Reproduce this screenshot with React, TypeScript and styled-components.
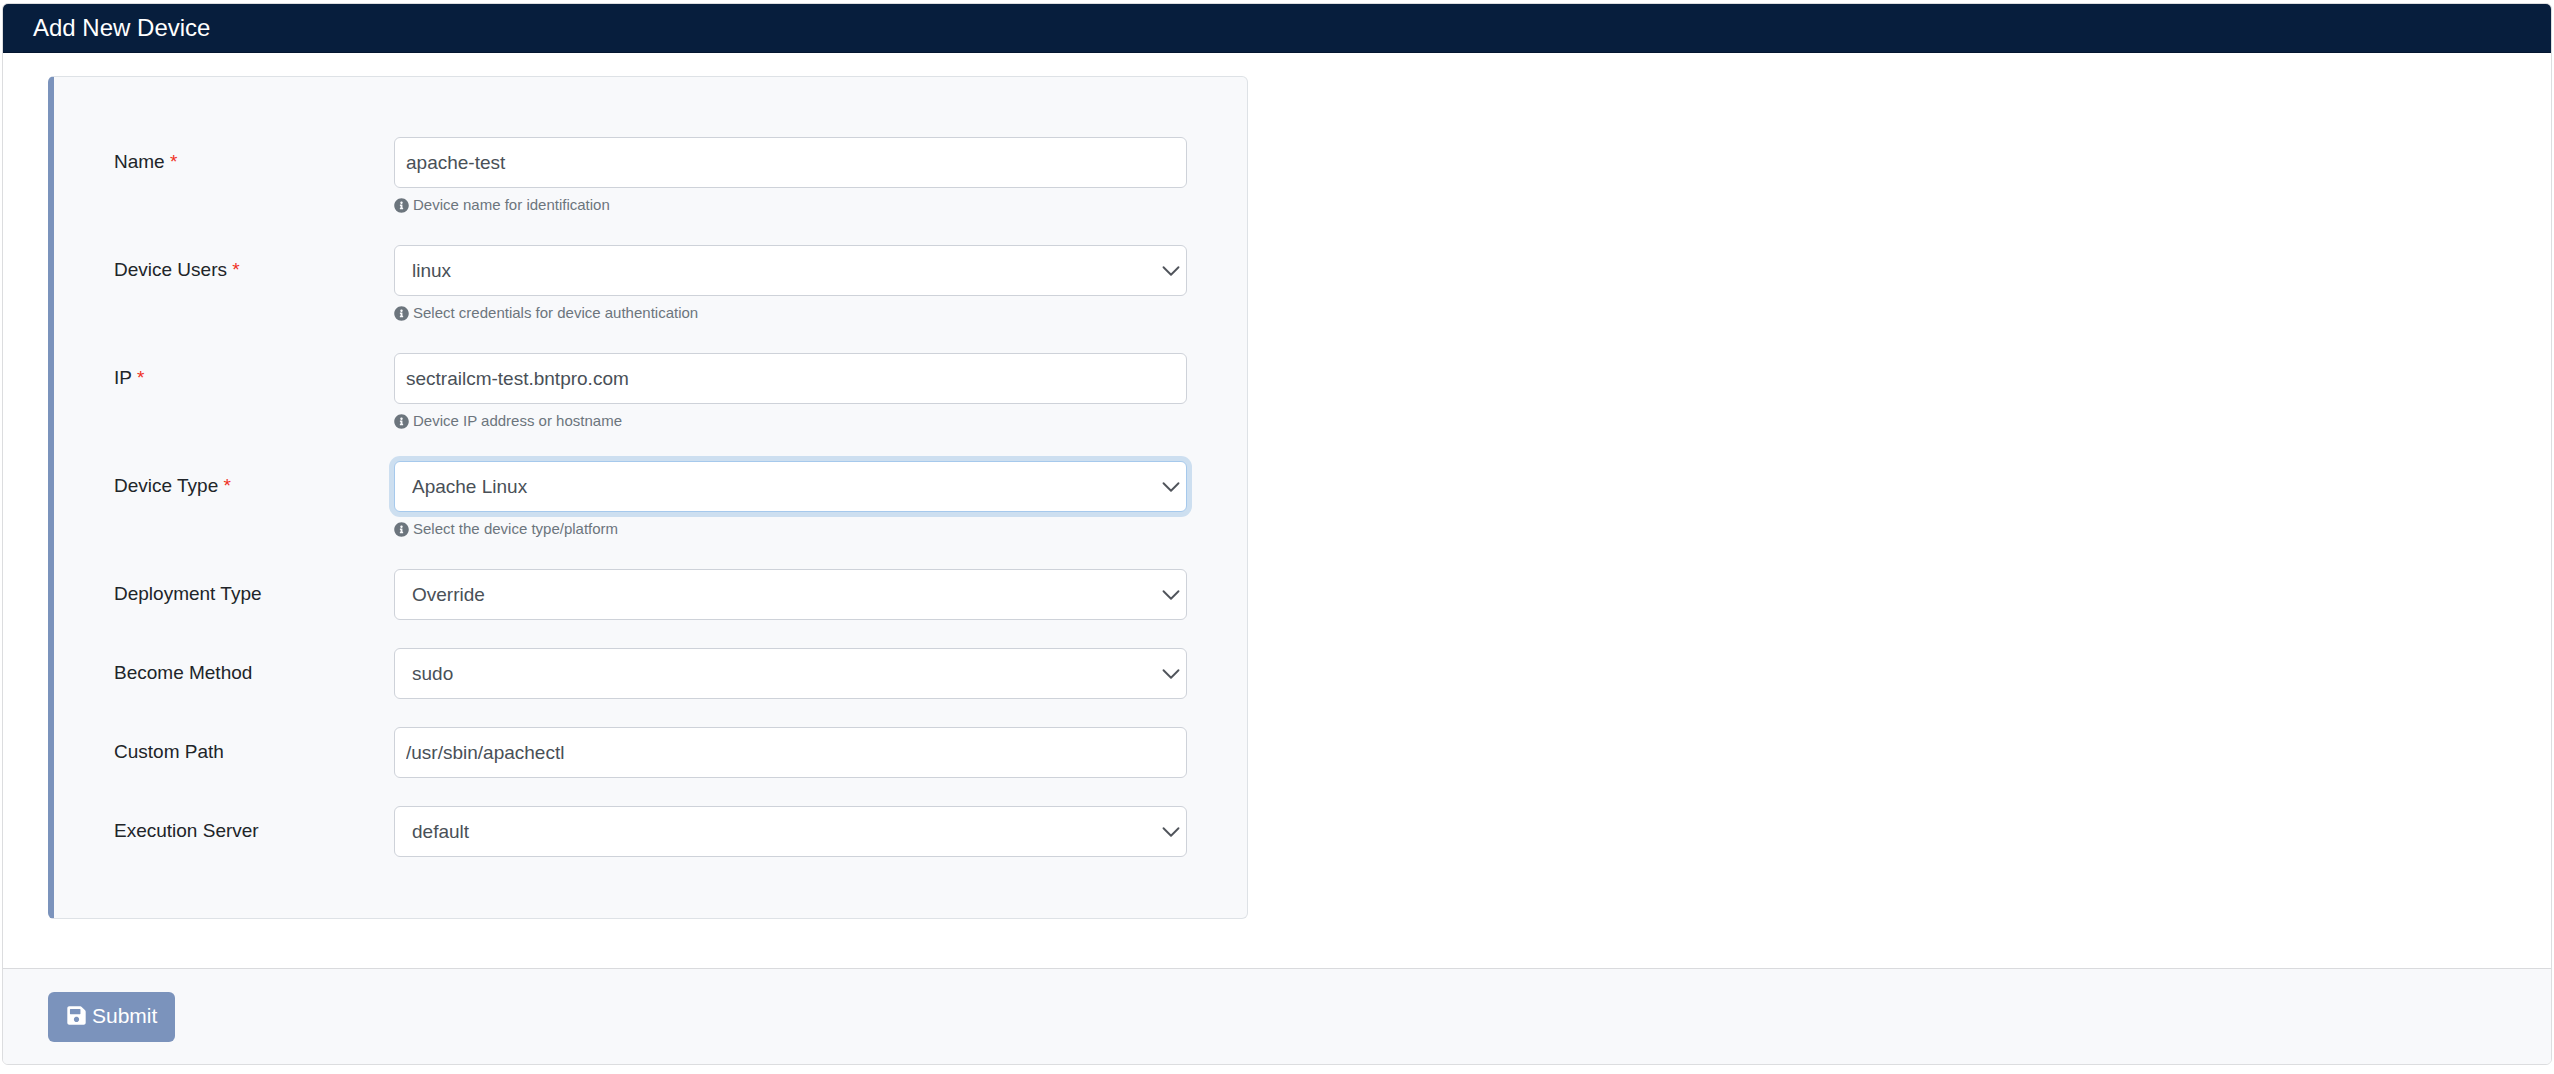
import React from "react";
import styled, { createGlobalStyle, css } from "styled-components";
import { FaInfoCircle, FaSave } from "react-icons/fa";

const GlobalStyle = createGlobalStyle`
  *, *::before, *::after {
    box-sizing: border-box;
  }
  body {
    margin: 0;
    background: #ffffff;
    color: #212529;
    font-family: "Liberation Sans", Arial, Helvetica, sans-serif;
    font-size: 19px;
    line-height: 28px;
  }
`;

const Card = styled.main`
  margin: 3px 2px 8px;
  border: 1px solid #dcdddf;
  border-radius: 6px;
  background: #ffffff;
  overflow: hidden;
`;

const CardHeader = styled.header`
  padding: 6px 30px;
  border-bottom: 1px solid #03152f;
  background: #071e3d;
`;

const Title = styled.h1`
  margin: 0;
  color: #ffffff;
  font-size: 24px;
  font-weight: 400;
  line-height: 36px;
`;

const CardBody = styled.div`
  padding: 23px 45px 49px;
`;

const Panel = styled.section`
  display: flex;
  flex-direction: column;
  gap: 28px;
  max-width: 1200px;
  padding: 60px 60px 61px;
  border: 1px solid #dee2e6;
  border-left: 6px solid #7b93bc;
  border-radius: 6px;
  background: #f8f9fb;
`;

const Row = styled.div`
  display: grid;
  grid-template-columns: 280px minmax(0, 1fr);
  align-items: start;
`;

const Label = styled.label`
  padding: 11px 0;
`;

const Required = styled.span`
  color: #f0301f;
`;

const controlStyle = css`
  width: 100%;
  height: 51px;
  margin: 0;
  border: 1px solid #ced2d9;
  border-radius: 6px;
  background: #ffffff;
  color: #495057;
  font: inherit;
  outline: none;
`;

const TextInput = styled.input`
  ${controlStyle}
  padding: 0 11px;
`;

const SelectBox = styled.div`
  display: grid;
  align-items: center;
`;

const Select = styled.select<{ $active?: boolean }>`
  ${controlStyle}
  grid-area: 1 / 1;
  appearance: none;
  padding: 0 40px 0 17px;
  ${({ $active }) =>
    $active &&
    css`
      border-color: #a6c9ec;
      box-shadow: 0 0 0 5px #cddff0;
    `}
`;

const Chevron = styled.svg`
  grid-area: 1 / 1;
  justify-self: end;
  width: 20px;
  height: 20px;
  margin-right: 6px;
  fill: none;
  stroke: #50545b;
  pointer-events: none;
`;

const Hint = styled.p`
  display: flex;
  align-items: center;
  gap: 4px;
  margin: 5px 0 0;
  color: #6c757d;
  font-size: 15px;
  line-height: 24px;
`;

const CardFooter = styled.footer`
  padding: 23px 45px 22px;
  border-top: 1px solid #d9dadd;
  background: #f8f9fb;
`;

const SubmitButton = styled.button`
  display: flex;
  align-items: center;
  gap: 5px;
  height: 50px;
  padding: 0 18px 3px;
  border: 0;
  border-radius: 6px;
  background: #7b93bc;
  color: #ffffff;
  font-family: inherit;
  font-size: 21px;
  line-height: 30px;
`;

type Field = {
  id: string;
  label: string;
  value: string;
  kind: "text" | "select";
  required?: boolean;
  hint?: string;
  active?: boolean;
};

const fields: Field[] = [
  { id: "name", label: "Name", value: "apache-test", kind: "text", required: true, hint: "Device name for identification" },
  { id: "users", label: "Device Users", value: "linux", kind: "select", required: true, hint: "Select credentials for device authentication" },
  { id: "ip", label: "IP", value: "sectrailcm-test.bntpro.com", kind: "text", required: true, hint: "Device IP address or hostname" },
  { id: "type", label: "Device Type", value: "Apache Linux", kind: "select", required: true, hint: "Select the device type/platform", active: true },
  { id: "deployment", label: "Deployment Type", value: "Override", kind: "select" },
  { id: "become", label: "Become Method", value: "sudo", kind: "select" },
  { id: "path", label: "Custom Path", value: "/usr/sbin/apachectl", kind: "text" },
  { id: "server", label: "Execution Server", value: "default", kind: "select" },
];

function FormRow({ field }: { field: Field }) {
  const hintId = field.hint ? `${field.id}-hint` : undefined;
  return (
    <Row>
      <Label htmlFor={field.id}>
        {field.label}
        {field.required && <Required> *</Required>}
      </Label>
      <div>
        {field.kind === "text" ? (
          <TextInput id={field.id} type="text" defaultValue={field.value} required={field.required} spellCheck={false} aria-describedby={hintId} />
        ) : (
          <SelectBox>
            <Select id={field.id} defaultValue={field.value} $active={field.active} aria-describedby={hintId}>
              <option>{field.value}</option>
            </Select>
            <Chevron viewBox="0 0 16 16" aria-hidden="true">
              <path d="m2 5 6 6 6-6" strokeWidth="1.5" strokeLinecap="round" strokeLinejoin="round" />
            </Chevron>
          </SelectBox>
        )}
        {field.hint && (
          <Hint id={hintId}>
            <FaInfoCircle size={15} aria-hidden="true" />
            {field.hint}
          </Hint>
        )}
      </div>
    </Row>
  );
}

export default function App() {
  return (
    <>
      <GlobalStyle />
      <Card>
        <CardHeader>
          <Title>Add New Device</Title>
        </CardHeader>
        <form onSubmit={(event) => event.preventDefault()}>
          <CardBody>
            <Panel>
              {fields.map((field) => (
                <FormRow key={field.id} field={field} />
              ))}
            </Panel>
          </CardBody>
          <CardFooter>
            <SubmitButton type="submit">
              <FaSave size={21} aria-hidden="true" />
              Submit
            </SubmitButton>
          </CardFooter>
        </form>
      </Card>
    </>
  );
}
